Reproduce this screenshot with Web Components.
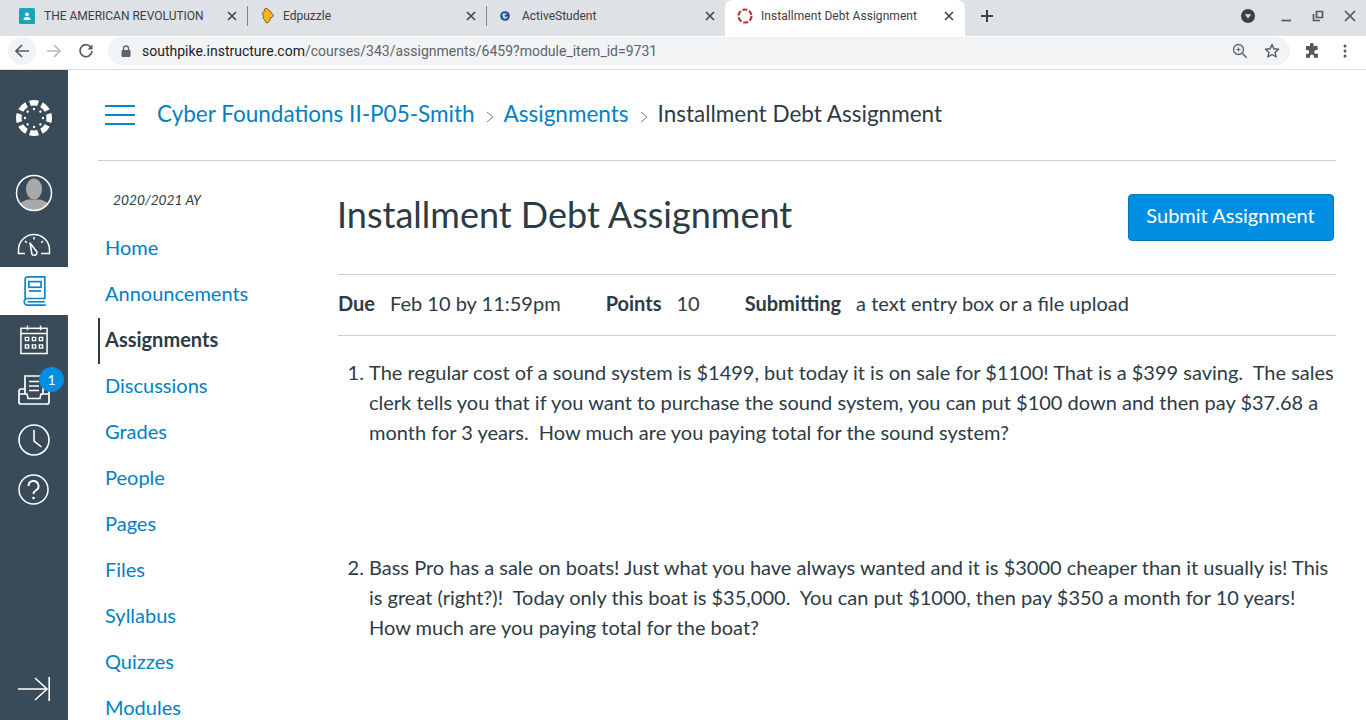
<!DOCTYPE html>
<html>
<head>
<meta charset="utf-8">
<title>Installment Debt Assignment</title>
<style>
  html, body { margin: 0; height: 720px; overflow: hidden; background: #fff; }
  body { display: flex; flex-direction: column; font-family: Lato, sans-serif; color: #2d3b45; }
</style>
</head>
<body>
<browser-bar>
  <browser-tab title-text="THE AMERICAN REVOLUTION">
    <svg slot="icon" width="16" height="16" viewBox="0 0 16 16"><rect width="16" height="16" y="0" rx="1.500" fill="#1ba3b8"/><circle cx="8" cy="6.300" r="1.900" fill="#fff"/><path d="M4.300 12c0-2 1.800-3 3.700-3s3.700 1 3.700 3z" fill="#fff"/></svg>
  </browser-tab>
  <browser-tab title-text="Edpuzzle">
    <svg slot="icon" style="margin-left:3px;flex:none" width="14" height="16" viewBox="0 0 16 16" preserveAspectRatio="none"><path d="M4.500.8c2-1 4 .2 4.300 1.900 1.500-.2 2.700.8 2.900 2.300 1.700.7 2.700 2.300 1.800 3.600-.7 1-2 1-2.900 1.300-.1 1.800-1 3.600-2.600 4.600-1.400.8-3 .2-3-1.100 0-1.200-1-1.700-1.800-2.500-.8-.8-.8-2 0-2.800-1-.8-2-2-1.300-3.300.5-1 1.500-1 2.100-1.300C3.800 2.300 3.900 1.200 4.500.8z" fill="#f6b422" stroke="#6f5312" stroke-width="1"/></svg>
  </browser-tab>
  <browser-tab title-text="ActiveStudent">
    <svg slot="icon" width="16" height="16" viewBox="0 0 16 16"><circle cx="8" cy="8" r="4.800" fill="#1f4f8f"/><path d="M5 6.500c1.500-1.500 4-1.500 5.500-.5-1 .5-3 .8-3 2.200 1 .5 2.500.5 3.500.5-.8 1.800-3 2.600-4.500 1.800z" fill="#c9d6e6"/></svg>
  </browser-tab>
  <browser-tab active title-text="Installment Debt Assignment">
    <svg slot="icon" width="16" height="16" viewBox="0 0 16 16"><circle cx="8" cy="8" r="6.500" fill="none" stroke="#b5392f" stroke-width="2.200" stroke-dasharray="5 1.800"/></svg>
  </browser-tab>
</browser-bar>
<browser-toolbar url-host="southpike.instructure.com" url-path="/courses/343/assignments/6459?module_item_id=9731"></browser-toolbar>
<canvas-page>
  <global-nav slot="nav"></global-nav>
  <crumb-bar slot="top"></crumb-bar>
  <course-menu slot="menu"></course-menu>
  <assignment-view slot="content"></assignment-view>
</canvas-page>

<script>
const tabTemplate = document.createElement('template')
tabTemplate.innerHTML = `
<style>
  :host {
    display: flex;
    align-items: center;
    box-sizing: border-box;
    width: 239px;
    height: 36px;
    padding: 0 7px 4px 11px;
    font: 12px Roboto, sans-serif;
    color: #3c4043;
    position: relative;
  }
  :host([active]) {
    width: 240px;
    background: #fff;
    border-radius: 8px 8px 0 0;
    color: #3c4043;
    padding-left: 12px;
    padding-right: 8px;
    letter-spacing: .05px;
  }
  #icon { display: flex; width: 16px; height: 16px; margin-right: 9px; }
  :host([active]) #icon { margin-right: 8px; }
  #name { flex: 1; white-space: nowrap; overflow: hidden; }
  svg { display: block; }
  #sep { position: absolute; right: -1px; top: 6px; width: 1px; height: 20px; background: #80868b; }
  :host([active]) #sep, :host(:nth-child(3)) #sep { display: none; }
</style>
<span id="icon"><slot name="icon"></slot></span>
<span id="name"></span>
<svg width="16" height="16" viewBox="0 0 16 16"><path d="M4 4l8 8M12 4l-8 8" stroke="#45494e" stroke-width="1.700" fill="none"/></svg>
<span id="sep"></span>
`

customElements.define('browser-tab',
  class extends HTMLElement {
    constructor () {
      super()
      this.attachShadow({ mode: 'open' })
        .appendChild(tabTemplate.content.cloneNode(true))
      this.shadowRoot.querySelector('#name').textContent = this.getAttribute('title-text')
    }
  }
)

const barTemplate = document.createElement('template')
barTemplate.innerHTML = `
<style>
  :host {
    display: flex;
    align-items: center;
    flex: none;
    height: 36px;
    padding-left: 8px;
    background: #dee1e6;
  }
  #tabs { display: flex; align-items: center; }
  #plus { margin: 0 0 4px 14px; display: block; }
  #controls { margin: 0 0 4px auto; display: flex; align-items: center; gap: 16px; padding-right: 8px; }
  svg { display: block; }
</style>
<div id="tabs"><slot></slot></div>
<svg id="plus" width="16" height="16" viewBox="0 0 16 16"><path d="M8 2v12M2 8h12" stroke="#3c4043" stroke-width="2"/></svg>
<div id="controls">
  <svg width="16" height="16" viewBox="0 0 16 16" style="margin-right:6px"><circle cx="8" cy="8" r="7" fill="#3c4043"/><path d="M4.800 6.300h6.400L8 10.500z" fill="#dee1e6"/></svg>
  <svg width="16" height="16" viewBox="0 0 16 16"><path d="M3.500 12.500h9.500" stroke="#55595e" stroke-width="1.700"/></svg>
  <svg width="16" height="16" viewBox="0 0 16 16"><path d="M6.500 3.500h6v6h-6z" fill="none" stroke="#55595e" stroke-width="1.700"/><path d="M3.500 6v6.500h6.500" fill="none" stroke="#55595e" stroke-width="1.700"/></svg>
  <svg width="16" height="16" viewBox="0 0 16 16"><path d="M3 3l10 10M13 3L3 13" stroke="#55595e" stroke-width="1.700"/></svg>
</div>
`

customElements.define('browser-bar',
  class extends HTMLElement {
    constructor () {
      super()
      this.attachShadow({ mode: 'open' })
        .appendChild(barTemplate.content.cloneNode(true))
    }
  }
)

const toolbarTemplate = document.createElement('template')
toolbarTemplate.innerHTML = `
<style>
  :host {
    display: flex;
    align-items: center;
    flex: none;
    box-sizing: border-box;
    height: 34px;
    padding: 0 0 3px 8px;
    background: #fff;
    border-bottom: 1px solid #dcdcdc;
    font: 14px Roboto, sans-serif;
  }
  button {
    all: unset;
    display: flex;
    align-items: center;
    justify-content: center;
    width: 28px;
    height: 28px;
    margin-right: 4px;
    border-radius: 50%;
  }
  #back { background: #f1f3f4; }
  #omnibox {
    display: flex;
    align-items: center;
    flex: 1;
    height: 28px;
    margin-left: 4px;
    padding-left: 12px;
    border-radius: 14px;
    background: #f1f3f4;
    color: #5f6368;
    white-space: nowrap;
  }
  #lock { margin-right: 10px; }
  #host { color: #202124; }
  #right { margin-left: auto; display: flex; align-items: center; gap: 16px; padding-right: 10px; }
  #ext { display: flex; align-items: center; gap: 17px; padding: 0 13px 0 14px; }
  svg { display: block; }
</style>
<button id="back"><svg width="16" height="16" viewBox="0 0 16 16"><path d="M15 8H2M8 2L2 8l6 6" fill="none" stroke="#55595e" stroke-width="1.700"/></svg></button>
<button><svg width="16" height="16" viewBox="0 0 16 16"><path d="M15 8H2M8 2L2 8l6 6" transform="rotate(180 8 8)" fill="none" stroke="#b6b9bc" stroke-width="1.700"/></svg></button>
<button><svg width="16" height="16" viewBox="0 0 16 16"><path d="M13.200 4.700A6 6 0 1 0 14 8" fill="none" stroke="#55595e" stroke-width="1.700"/><path d="M14.500 1.500v5h-5z" fill="#55595e"/></svg></button>
<div id="omnibox">
  <svg id="lock" width="12" height="12" viewBox="0 0 12 12"><rect x="1.500" y="5" width="9" height="7" rx="1" fill="#5f6368"/><path d="M3.500 5V3.500a2.500 2.500 0 0 1 5 0V5" fill="none" stroke="#5f6368" stroke-width="1.300"/></svg>
  <span id="host"></span><span id="path"></span>
  <div id="right">
    <svg width="16" height="16" viewBox="0 0 16 16"><circle cx="6.500" cy="6.500" r="5" fill="none" stroke="#5f6368" stroke-width="1.300"/><path d="M10.200 10.200l4.500 4.500" stroke="#5f6368" stroke-width="1.600"/><path d="M4.300 6.500h4.400M6.500 4.300v4.400" stroke="#5f6368"/></svg>
    <svg width="16" height="16" viewBox="0 0 16 16"><path d="M8 1.500l1.900 4.300 4.600.4-3.500 3.100 1.100 4.600L8 11.500l-4.100 2.400 1.100-4.600L1.500 6.200l4.600-.4z" fill="none" stroke="#55595e" stroke-width="1.400" stroke-linejoin="round"/></svg>
  </div>
</div>
<div id="ext">
  <svg width="16" height="16" viewBox="0 0 16 16"><path d="M6 1.500a1.800 1.800 0 0 1 3.600 0V3h4v4h-1.500a1.900 1.900 0 0 0 0 3.800H14v4H9.800v-1.400a1.900 1.900 0 0 0-3.800 0v1.400H2v-4h1.300a1.900 1.900 0 0 0 0-3.800H2V3h4z" fill="#55595e"/></svg>
  <svg width="16" height="16" viewBox="0 0 16 16"><circle cx="8" cy="3" r="1.500" fill="#55595e"/><circle cx="8" cy="8" r="1.500" fill="#55595e"/><circle cx="8" cy="13" r="1.500" fill="#55595e"/></svg>
</div>
`

customElements.define('browser-toolbar',
  class extends HTMLElement {
    constructor () {
      super()
      this.attachShadow({ mode: 'open' })
        .appendChild(toolbarTemplate.content.cloneNode(true))
      this.shadowRoot.querySelector('#host').textContent = this.getAttribute('url-host')
      this.shadowRoot.querySelector('#path').textContent = this.getAttribute('url-path')
    }
  }
)

const pageTemplate = document.createElement('template')
pageTemplate.innerHTML = `
<style>
  :host { display: flex; flex: 1; min-height: 0; overflow: hidden; }
  #main { flex: 1; min-width: 0; padding: 0 30px; }
  #columns { display: flex; }
</style>
<slot name="nav"></slot>
<div id="main">
  <slot name="top"></slot>
  <div id="columns">
    <slot name="menu"></slot>
    <slot name="content"></slot>
  </div>
</div>
`

customElements.define('canvas-page',
  class extends HTMLElement {
    constructor () {
      super()
      this.attachShadow({ mode: 'open' })
        .appendChild(pageTemplate.content.cloneNode(true))
    }
  }
)

const navTemplate = document.createElement('template')
navTemplate.innerHTML = `
<style>
  :host {
    display: flex;
    flex-direction: column;
    flex: none;
    width: 68px;
    background: #394b58;
  }
  .item { display: flex; align-items: center; justify-content: center; height: 49.500px; position: relative; }
  #logo { height: 98px; padding-bottom: 2px; box-sizing: border-box; }
  #active { background: #fff; height: 48px; }
  #active ~ .item { height: 49.700px; }
  #active ~ #collapse { margin-top: auto; height: 62px; }
  #badge {
    position: absolute;
    left: 39px;
    top: 2px;
    width: 25px;
    height: 25px;
    border-radius: 50%;
    background: #008ee2;
    color: #fff;
    font: 14px/25px Lato, sans-serif;
    text-align: center;
  }
  svg { display: block; }
</style>
<div class="item" id="logo">
  <svg id="mark" width="36" height="36" viewBox="-18 -18 36 36"></svg>
</div>
<div class="item">
  <svg width="38" height="38" viewBox="0 0 38 38"><defs><clipPath id="c"><circle cx="19" cy="19" r="17"/></clipPath></defs><g clip-path="url(#c)"><circle cx="19" cy="19" r="17" fill="#394b58"/><ellipse cx="19" cy="15" rx="8" ry="10.500" fill="#a9a9a9"/><path d="M2 38c0-9 6-11 11-12.500h12C30 27 36 29 36 38z" fill="#a9a9a9"/></g><circle cx="19" cy="19" r="17.500" fill="none" stroke="#fff" stroke-width="1.500"/></svg>
</div>
<div class="item">
  <svg style="margin-top:4px" width="34" height="26" viewBox="0 0 34 26" fill="none" stroke="#fff" stroke-width="1.500"><path d="M8 22.500H1.500v-3.500a15.500 15.500 0 0 1 31 0v3.500H24"/><path d="M13 12l7 9a3 3 0 0 1-5 2.500z" stroke-linejoin="round"/><path d="M17 6v2.500M8 10l1.800 1.800M26 10l-1.800 1.800"/></svg>
</div>
<div class="item" id="active">
  <svg width="25" height="30" viewBox="0 0 26 32" fill="none" stroke="#0e84cd" stroke-width="1.800"><path d="M3 24V4a3 3 0 0 1 3-3h18v23H5.500a3.500 3.500 0 0 0 0 7H25"/><path d="M5.500 27.500H24"/><rect x="7" y="6" width="13" height="6"/><path d="M7 16h13"/></svg>
</div>
<div class="item">
  <svg width="28" height="31" viewBox="0 0 30 32" fill="none" stroke="#fff" stroke-width="1.600"><rect x="1" y="4" width="28" height="27"/><path d="M8 1v5M22 1v5M1 9.500h28"/><g fill="#fff" stroke="none"><path d="M5 13h5v5H5zM12.500 13h5v5h-5zM20 13h5v5h-5zM5 21h5v5H5zM12.500 21h5v5h-5zM20 21h5v5h-5z"/></g><g fill="#394b58" stroke="none"><path d="M6.500 14.500h2v2h-2zM14 14.500h2v2h-2zM21.500 14.500h2v2h-2zM6.500 22.500h2v2h-2zM14 22.500h2v2h-2zM21.500 22.500h2v2h-2z"/></g></svg>
</div>
<div class="item">
  <svg width="32" height="32" viewBox="0 0 32 32" fill="none" stroke="#fff" stroke-width="1.700"><path d="M7 20V2h18v18"/><path d="M11 7.500h10M11 12h10M11 16.500h10"/><path d="M7 15H3a2 2 0 0 0-2 2v11a2 2 0 0 0 2 2h26a2 2 0 0 0 2-2V17a2 2 0 0 0-2-2h-4"/><path d="M1 20h8l1 4.500h12l1-4.500h8"/></svg>
  <span id="badge">1</span>
</div>
<div class="item">
  <svg style="margin-top:2px" width="32" height="32" viewBox="0 0 32 32" fill="none" stroke="#fff" stroke-width="1.600"><circle cx="16" cy="16" r="15"/><path d="M16 6v11l7.500 6"/></svg>
</div>
<div class="item">
  <svg width="31" height="31" viewBox="0 0 31 31" style="margin:1px 1px 0 0" fill="none" stroke="#fff" stroke-width="1.500"><circle cx="15.500" cy="15.500" r="14.500"/><path d="M10.500 12a5 5 0 1 1 7.500 4.300c-1.500.9-2.500 1.700-2.500 3.700" stroke-width="1.900"/><circle cx="15.500" cy="24" r="1.300" fill="#fff" stroke="none"/></svg>
</div>
<div class="item" id="collapse">
  <svg width="32" height="24" viewBox="0 0 32 24" fill="none" stroke="#fff" stroke-width="1.600"><path d="M0 12h29M17 1l12 11-12 11"/><path d="M31.200 0v24"/></svg>
</div>
`

customElements.define('global-nav',
  class extends HTMLElement {
    constructor () {
      super()
      this.attachShadow({ mode: 'open' })
        .appendChild(navTemplate.content.cloneNode(true))
      // eight wedges and eight dots round the ring
      let marks = ''
      for (let i = 0; i < 8; i++) {
        const a = i * 45
        marks += `<path transform="rotate(${a})" d="M-5 -17.300Q0 -18.600 5 -17.300L3.200 -12Q0 -12.800 -3.200 -12Z" fill="#fff"/>`
        marks += `<circle transform="rotate(${a})" cx="0" cy="-9" r="1.200" fill="#fff"/>`
      }
      this.shadowRoot.querySelector('#mark').innerHTML = marks
    }
  }
)

const crumbTemplate = document.createElement('template')
crumbTemplate.innerHTML = `
<style>
  :host {
    display: flex;
    align-items: center;
    box-sizing: border-box;
    height: 91px;
    padding: 0 0 3px 7px;
    border-bottom: 1px solid #c7cdd1;
    font: 22.500px Lato, sans-serif;
    white-space: nowrap;
  }
  a { color: #0081c2; text-decoration: none; }
  #menu { margin: 2px 22px 0 0; display: block; }
  .sep { margin: 6px 9px 0 10px; display: block; }
</style>
<svg id="menu" width="30" height="20" viewBox="0 0 30 20"><path d="M0 1h30M0 10h30M0 19h30" stroke="#0e84cd" stroke-width="2"/></svg>
<a href="#">Cyber Foundations II-P05-Smith</a>
<svg class="sep" width="10" height="12" viewBox="0 0 10 12"><path d="M2 1l6 5-6 5" fill="none" stroke="#73818c" stroke-width="1"/></svg>
<a href="#">Assignments</a>
<svg class="sep" width="10" height="12" viewBox="0 0 10 12"><path d="M2 1l6 5-6 5" fill="none" stroke="#73818c" stroke-width="1"/></svg>
<span>Installment Debt Assignment</span>
`

customElements.define('crumb-bar',
  class extends HTMLElement {
    constructor () {
      super()
      this.attachShadow({ mode: 'open' })
        .appendChild(crumbTemplate.content.cloneNode(true))
    }
  }
)

const menuTemplate = document.createElement('template')
menuTemplate.innerHTML = `
<style>
  :host { display: block; flex: none; width: 240px; padding-top: 30px; font-family: Lato, sans-serif; }
  #term { font-size: 13.750px; font-style: italic; line-height: 18px; padding-left: 15px; margin-bottom: 17px; }
  a {
    display: block;
    height: 46px;
    line-height: 42px;
    padding-left: 7px;
    font-size: 20px;
    color: #0081c2;
    text-decoration: none;
    box-sizing: border-box;
  }
  a.on { color: #2d3b45; font-weight: 700; border-left: 2px solid #2d3b45; padding-left: 5px; }
</style>
<div id="term">2020/2021 AY</div>
<a href="#">Home</a>
<a href="#">Announcements</a>
<a href="#" class="on">Assignments</a>
<a href="#">Discussions</a>
<a href="#">Grades</a>
<a href="#">People</a>
<a href="#">Pages</a>
<a href="#">Files</a>
<a href="#">Syllabus</a>
<a href="#">Quizzes</a>
<a href="#">Modules</a>
`

customElements.define('course-menu',
  class extends HTMLElement {
    constructor () {
      super()
      this.attachShadow({ mode: 'open' })
        .appendChild(menuTemplate.content.cloneNode(true))
    }
  }
)

const assignmentTemplate = document.createElement('template')
assignmentTemplate.innerHTML = `
<style>
  :host { display: block; flex: 1; min-width: 0; font: 20px/30px Lato, sans-serif; color: #2d3b45; }
  #head { display: flex; justify-content: space-between; align-items: flex-start; height: 113px; padding-top: 33px; box-sizing: border-box; }
  h1 { margin: -2px 0 0 -1px; font-size: 36px; font-weight: 400; line-height: 44px; }
  #submit {
    display: flex;
    align-items: center;
    justify-content: center;
    box-sizing: border-box;
    width: 206px;
    height: 47px;
    margin-right: 2px;
    padding: 0 1px 6px 0;
    background: #008ee2;
    border: 1px solid #0079c1;
    border-radius: 4px;
    color: #fff;
    font: 20px/24px Lato, sans-serif;
  }
  #details {
    display: flex;
    align-items: center;
    height: 62px;
    padding-bottom: 4px;
    box-sizing: border-box;
    border-top: 1px solid #c7cdd1;
    border-bottom: 1px solid #c7cdd1;
    white-space: nowrap;
  }
  #details b { margin-right: 15px; font-weight: 700; }
  #details span { margin-right: 45px; }
  ol { margin: 21px 0 0; padding: 0 0 0 31px; }
  li + li { margin-top: 105px; }
</style>
<div id="head">
  <h1>Installment Debt Assignment</h1>
  <div id="submit">Submit Assignment</div>
</div>
<div id="details">
  <b>Due</b><span>Feb 10 by 11:59pm</span>
  <b>Points</b><span>10</span>
  <b>Submitting</b><span>a text entry box or a file upload</span>
</div>
<ol>
  <li>The regular cost of a sound system is $1499, but today it is on sale for $1100! That is a $399 saving.&nbsp; The sales clerk tells you that if you want to purchase the sound system, you can put $100 down and then pay $37.68 a month for 3 years.&nbsp; How much are you paying total for the sound system?</li>
  <li>Bass Pro has a sale on boats! Just what you have always wanted and it is $3000 cheaper than it usually is! This is great (right?)!&nbsp; Today only this boat is $35,000.&nbsp; You can put $1000, then pay $350 a month for 10 years!&nbsp; How much are you paying total for the boat?</li>
</ol>
`

customElements.define('assignment-view',
  class extends HTMLElement {
    constructor () {
      super()
      this.attachShadow({ mode: 'open' })
        .appendChild(assignmentTemplate.content.cloneNode(true))
    }
  }
)
</script>
</body>
</html>
